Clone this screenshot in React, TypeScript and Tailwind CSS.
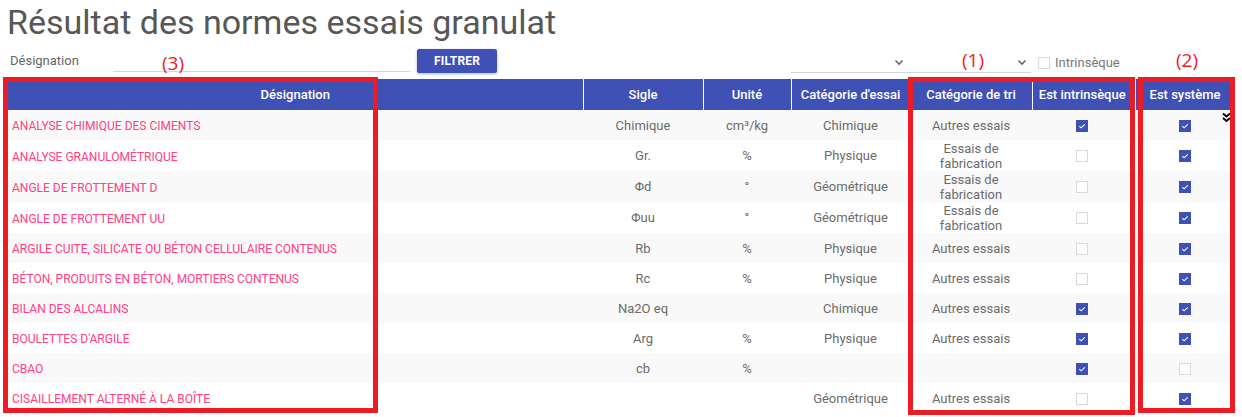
import React from "react";

type Row = {
  d: string;
  s: string;
  u: string;
  c: string;
  t: string;
  two?: boolean;
  i: boolean;
  sys: boolean;
};

const rows: Row[] = [
  { d: "ANALYSE CHIMIQUE DES CIMENTS", s: "Chimique", u: "cm³/kg", c: "Chimique", t: "Autres essais", i: true, sys: true },
  { d: "ANALYSE GRANULOMÉTRIQUE", s: "Gr.", u: "%", c: "Physique", t: "", two: true, i: false, sys: true },
  { d: "ANGLE DE FROTTEMENT D", s: "Φd", u: "°", c: "Géométrique", t: "", two: true, i: false, sys: true },
  { d: "ANGLE DE FROTTEMENT UU", s: "Φuu", u: "°", c: "Géométrique", t: "", two: true, i: false, sys: true },
  { d: "ARGILE CUITE, SILICATE OU BÉTON CELLULAIRE CONTENUS", s: "Rb", u: "%", c: "Physique", t: "Autres essais", i: false, sys: true },
  { d: "BÉTON, PRODUITS EN BÉTON, MORTIERS CONTENUS", s: "Rc", u: "%", c: "Physique", t: "Autres essais", i: false, sys: true },
  { d: "BILAN DES ALCALINS", s: "Na2O eq", u: "", c: "Chimique", t: "Autres essais", i: true, sys: true },
  { d: "BOULETTES D'ARGILE", s: "Arg", u: "%", c: "Physique", t: "Autres essais", i: true, sys: true },
  { d: "CBAO", s: "cb", u: "%", c: "", t: "", i: true, sys: false },
  { d: "CISAILLEMENT ALTERNÉ À LA BOÎTE", s: "", u: "", c: "Géométrique", t: "Autres essais", i: false, sys: true },
];

function Check({ on }: { on: boolean }) {
  if (on) {
    return (
      <span className="inline-flex w-[12px] h-[12px] bg-[#3f51b5] items-center justify-center align-middle">
        <svg width="8" height="8" viewBox="0 0 8 8">
          <polyline points="1.3,4.2 3.1,5.8 6.8,2.4" fill="none" stroke="#ffffff" strokeWidth="1.1" />
        </svg>
      </span>
    );
  }
  return <span className="inline-block w-[12px] h-[12px] border border-[#d9d9d9] bg-white align-middle" />;
}

function Chevron() {
  return (
    <svg width="10" height="7" viewBox="0 0 10 7">
      <polyline points="1.5,1.5 5,5 8.5,1.5" fill="none" stroke="#666" strokeWidth="1.6" />
    </svg>
  );
}

const th = "text-white text-[13px] font-medium text-center px-1 border-l border-white";
const td = "text-[13px] text-[#6b6b6b] text-center px-1 leading-[15px]";

export default function App() {
  return (
    <div className="relative w-[1242px] h-[417px] overflow-hidden bg-white" style={{ fontFamily: "Roboto, 'Noto Sans', sans-serif" }}>
      <div className="h-[44px] pl-[7px] pt-[1px] text-[34px] leading-[42px] text-[#575757] whitespace-nowrap">
        Résultat des normes essais granulat
      </div>

      <div className="h-[35px] flex items-start">
        <div className="ml-[10px] w-[103px] mt-[9px] text-[13px] leading-[16px] text-[#666]">Désignation</div>
        <div className="w-[298px] h-[28px] border-b border-[#d6d6d6]" />
        <button className="ml-[6px] mt-[5px] w-[80px] h-[24px] rounded-[2px] bg-[#3f51b5] text-white text-[12px] font-bold tracking-[0.2px] shadow-[0_1px_3px_rgba(0,0,0,0.3)]">
          FILTRER
        </button>
        <div className="ml-[294px] w-[240px] h-[29px] border-b border-[#d6d6d6] flex">
          <div className="w-[116px] flex items-end justify-end pb-[6px] pr-[3px]">
            <Chevron />
          </div>
          <div className="w-[124px] flex items-end justify-end pb-[6px] pr-[4px]">
            <Chevron />
          </div>
        </div>
        <div className="ml-[7px] mt-[13px] w-[12px] h-[12px] border border-[#d9d9d9]" />
        <div className="ml-[5px] mt-[11px] text-[13px] leading-[16px] text-[#777]">Intrinsèque</div>
      </div>

      <table className="ml-[8px] w-[1226px] table-fixed border-collapse">
        <colgroup>
          <col className="w-[575px]" />
          <col className="w-[120px]" />
          <col className="w-[88px]" />
          <col className="w-[119px]" />
          <col className="w-[122px]" />
          <col className="w-[102px]" />
          <col className="w-[100px]" />
        </colgroup>
        <thead>
          <tr className="h-[31px] bg-[#3f51b5]">
            <th className="text-white text-[13px] font-medium text-center px-1">Désignation</th>
            <th className={th}>Sigle</th>
            <th className={th}>Unité</th>
            <th className={th + " whitespace-nowrap"}>Catégorie d'essai</th>
            <th className={th}>Catégorie de tri</th>
            <th className={th + " whitespace-nowrap"}>Est intrinsèque</th>
            <th className="text-white text-[13px] font-medium text-center px-1 border-l-[4px] border-white">Est système</th>
          </tr>
        </thead>
        <tbody>
          {rows.map((r, k) => (
            <tr key={k} className={(r.two ? "h-[31px] " : "h-[30px] ") + (k % 2 === 0 ? "bg-[#f9f9f9]" : "bg-white")}>
              <td className="text-[12px] text-[#ff4081] text-left pl-[4px] pt-[2px] whitespace-nowrap">{r.d}</td>
              <td className={td}>{r.s}</td>
              <td className={td}>{r.u}</td>
              <td className={td}>{r.c}</td>
              <td className={td}>
                {r.two ? (
                  <>
                    Essais de
                    <br />
                    fabrication
                  </>
                ) : (
                  r.t
                )}
              </td>
              <td className="text-center">
                <Check on={r.i} />
              </td>
              <td className="text-center border-l-[4px] border-white">
                <Check on={r.sys} />
              </td>
            </tr>
          ))}
        </tbody>
      </table>

      {/* annotation overlays */}
      <div className="absolute left-[3px] top-[77px] w-[375px] h-[336px] border-[5px] border-[#ed1c24]" />
      <div className="absolute left-[908px] top-[77px] w-[227px] h-[338px] border-[5px] border-[#ed1c24]" />
      <div className="absolute left-[1138px] top-[77px] w-[97px] h-[336px] border-[5px] border-[#ed1c24]" />

      <div className="absolute left-[162px] top-[51px] text-[19px] leading-[24px] text-[#ed1c24]" style={{ fontFamily: "'Open Sans', sans-serif" }}>(3)</div>
      <div className="absolute left-[962px] top-[48px] text-[19px] leading-[24px] text-[#ed1c24]" style={{ fontFamily: "'Open Sans', sans-serif" }}>(1)</div>
      <div className="absolute left-[1176px] top-[48px] text-[19px] leading-[24px] text-[#ed1c24]" style={{ fontFamily: "'Open Sans', sans-serif" }}>(2)</div>

      <svg className="absolute left-[1222px] top-[112px]" width="9" height="11" viewBox="0 0 9 11">
        <polyline points="1,1.5 4.5,4.5 8,1.5" fill="none" stroke="#000" strokeWidth="1.8" />
        <polyline points="1,6 4.5,9 8,6" fill="none" stroke="#000" strokeWidth="1.8" />
      </svg>
    </div>
  );
}
